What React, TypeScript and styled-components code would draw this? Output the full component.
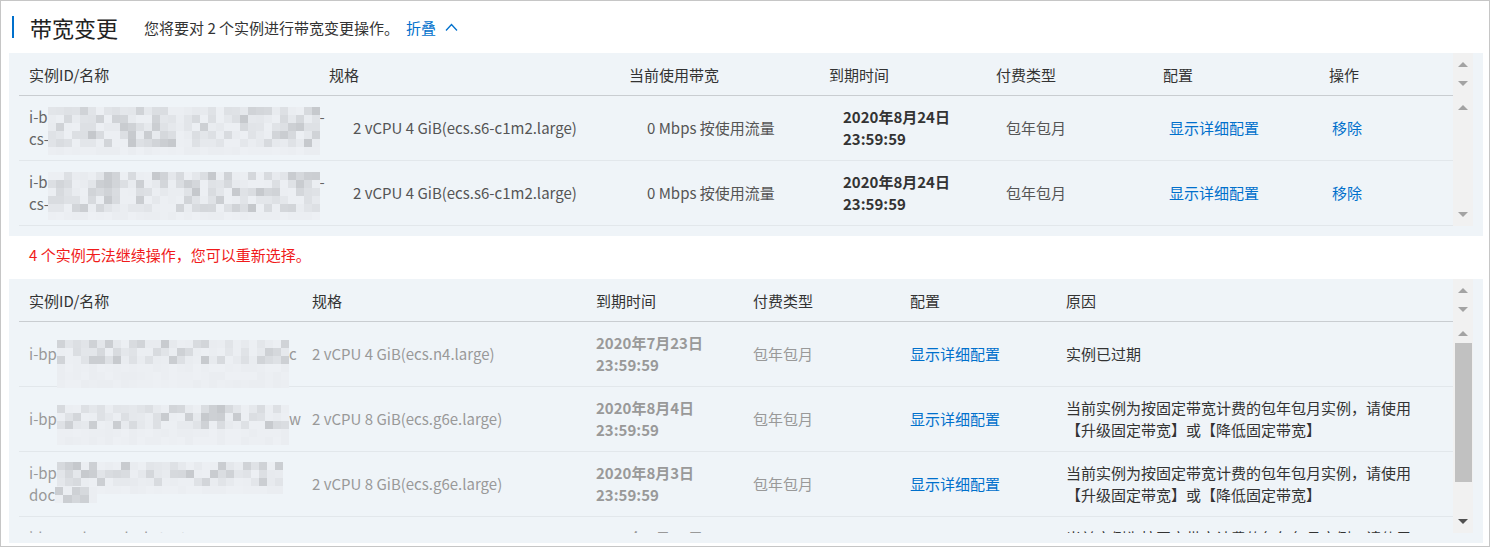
import React from 'react';
import styled, { createGlobalStyle } from 'styled-components';

const GlobalStyle = createGlobalStyle`
  html, body { margin: 0; padding: 0; background: #fff; }
  body {
    font-family: "Noto Sans CJK SC", "Noto Sans", sans-serif;
    font-size: 15px;
    color: #333;
  }
  * { box-sizing: border-box; }
`;

const BLUE = '#0070cc';

const Frame = styled.div`
  width: 1490px;
  height: 547px;
  border: 1px solid #c6c6c6;
  padding: 0 6px 0 8px;
  display: flex;
  flex-direction: column;
  overflow: hidden;
`;

const TitleRow = styled.div`
  height: 52px;
  display: flex;
  align-items: center;
  padding-left: 3px;
`;

const TitleBar = styled.span`
  width: 2px;
  height: 22px;
  background: ${BLUE};
`;

const Title = styled.h1`
  margin: 0 0 0 16px;
  font-size: 22px;
  font-weight: 400;
  line-height: 1;
  color: #222;
`;

const Subtitle = styled.span`
  margin-left: 26px;
  font-size: 15px;
  color: #333;
`;

const FoldLink = styled.a`
  margin-left: 7px;
  color: ${BLUE};
  font-size: 15px;
  display: inline-flex;
  align-items: center;
  gap: 9px;
  cursor: pointer;
`;

const Panel = styled.section`
  background: #eff4f8;
  padding: 0 10px 10px 10px;
`;

const HeadRow = styled.div`
  display: flex;
`;

const HeadGrid = styled.div<{ $cols: string }>`
  flex: 1;
  display: grid;
  grid-template-columns: ${(p) => p.$cols};
  height: 43px;
  align-items: center;
  border-bottom: 1px solid #c9cdd1;
`;

const HeadCell = styled.div`
  padding-left: 10px;
  color: #333;
  white-space: nowrap;
`;

const Track = styled.div`
  width: 20px;
  background: #f1f1f1;
  display: flex;
  flex-direction: column;
  align-items: center;
`;

const HeadTrack = styled(Track)`
  padding-top: 9px;
  gap: 14px;
`;

const BodyTrack = styled(Track)`
  padding: 9px 0 9px;
`;

const Arrow = styled.span<{ $dir: 'up' | 'down'; $dark?: boolean }>`
  width: 0;
  height: 0;
  border-left: 5px solid transparent;
  border-right: 5px solid transparent;
  ${(p) =>
    p.$dir === 'up'
      ? `border-bottom: 5px solid ${p.$dark ? '#505050' : '#a3a3a3'};`
      : `border-top: 5px solid ${p.$dark ? '#505050' : '#a3a3a3'};`}
`;

const Thumb = styled.span`
  width: 17px;
  height: 139px;
  margin-top: 7px;
  background: #c1c1c1;
`;

const Spacer = styled.span`
  flex: 1;
`;

const BodyWrap = styled.div`
  display: flex;
`;

const Viewport = styled.div<{ $h: number }>`
  flex: 1;
  height: ${(p) => p.$h}px;
  overflow: hidden;
`;

const Row = styled.div<{ $cols: string }>`
  display: grid;
  grid-template-columns: ${(p) => p.$cols};
  min-height: 65px;
  align-items: center;
  border-bottom: 1px solid #e2e7eb;
`;

type Tone = 'id' | 'normal' | 'muted' | 'strong' | 'link' | 'reason' | 'mutedStrong';

const toneColor: Record<Tone, string> = {
  id: '#666',
  normal: '#555',
  muted: '#999',
  strong: '#333',
  mutedStrong: '#999',
  link: BLUE,
  reason: '#333',
};

const Cell = styled.div<{ $tone: Tone }>`
  padding-left: 10px;
  line-height: 22px;
  color: ${(p) => toneColor[p.$tone]};
  font-weight: ${(p) => (p.$tone === 'strong' || p.$tone === 'mutedStrong' ? 700 : 400)};
  cursor: ${(p) => (p.$tone === 'link' ? 'pointer' : 'default')};
  white-space: nowrap;
`;

const Line = styled.div`
  display: block;
  white-space: nowrap;
`;

const MaskSlot = styled.span<{ $w: number }>`
  display: inline-block;
  width: ${(p) => p.$w}px;
  height: 22px;
  vertical-align: top;
  position: relative;
`;

const MosaicGrid = styled.span<{ $cols: number; $top: number }>`
  position: absolute;
  left: 0;
  top: ${(p) => p.$top}px;
  width: 100%;
  display: grid;
  grid-template-columns: repeat(${(p) => p.$cols}, 1fr);
  grid-auto-rows: 8px;
`;

const Tile = styled.span`
  display: block;
`;

const Note = styled.div`
  height: 43px;
  display: flex;
  align-items: center;
  padding: 0 0 7px 20px;
  color: #f01b1b;
  font-size: 15px;
`;

function mulberry32(a: number) {
  return function () {
    a |= 0;
    a = (a + 0x6d2b79f5) | 0;
    let t = Math.imul(a ^ (a >>> 15), 1 | a);
    t = (t + Math.imul(t ^ (t >>> 7), 61 | t)) ^ t;
    return ((t ^ (t >>> 14)) >>> 0) / 4294967296;
  };
}

function Mask({ w, seed, rows, faintFrom, top = 0 }: { w: number; seed: number; rows: number; faintFrom: number; top?: number }) {
  const cols = Math.max(1, Math.round(w / 8));
  const rnd = mulberry32(seed);
  const tiles: string[] = [];
  for (let r = 0; r < rows; r++) {
    for (let c = 0; c < cols; c++) {
      const faint = r >= faintFrom;
      const x = rnd();
      const v = faint ? 234 + Math.floor(x * 4) : 236 - Math.floor(x * x * 40);
      tiles.push(`rgb(${v},${Math.min(255, v + 3)},${Math.min(255, v + 7)})`);
    }
  }
  return (
    <MaskSlot $w={w}>
      <MosaicGrid $cols={cols} $top={top}>
        {tiles.map((c, i) => (
          <Tile key={i} style={{ background: c }} />
        ))}
      </MosaicGrid>
    </MaskSlot>
  );
}

const ChevronUp = () => (
  <svg width="13" height="8" viewBox="0 0 13 8" fill="none">
    <polyline points="1,7.5 6.5,1.5 12,7.5" stroke={BLUE} strokeWidth="1.3" />
  </svg>
);

const P1_HEAD = '300px 300px 200px 167px 167px 166px 134px';
const P1_BODY = '324px 294px 196px 163px 163px 163px 131px';
const P2_COLS = '283px 284px 157px 157px 156px 397px';

const p1Head = ['实例ID/名称', '规格', '当前使用带宽', '到期时间', '付费类型', '配置', '操作'];
const p2Head = ['实例ID/名称', '规格', '到期时间', '付费类型', '配置', '原因'];

const p1Rows = [{ seed: 11 }, { seed: 23 }];

const REASON1 = '当前实例为按固定带宽计费的包年包月实例，请使用';
const REASON2 = '【升级固定带宽】或【降低固定带宽】';

export default function App() {
  return (
    <>
      <GlobalStyle />
      <Frame>
        <TitleRow>
          <TitleBar />
          <Title>带宽变更</Title>
          <Subtitle>您将要对 2 个实例进行带宽变更操作。</Subtitle>
          <FoldLink>
            折叠
            <ChevronUp />
          </FoldLink>
        </TitleRow>

        <Panel>
          <HeadRow>
            <HeadGrid $cols={P1_HEAD}>
              {p1Head.map((h) => (
                <HeadCell key={h}>{h}</HeadCell>
              ))}
            </HeadGrid>
            <HeadTrack>
              <Arrow $dir="up" />
              <Arrow $dir="down" />
            </HeadTrack>
          </HeadRow>
          <BodyWrap>
            <Viewport $h={130}>
              {p1Rows.map((r, i) => (
                <Row key={i} $cols={P1_BODY}>
                  <Cell $tone="id">
                    <Line>
                      i-b
                      <Mask w={272} seed={r.seed} rows={6} faintFrom={5} top={1} />-
                    </Line>
                    <Line>cs-</Line>
                  </Cell>
                  <Cell $tone="normal">2 vCPU 4 GiB(ecs.s6-c1m2.large)</Cell>
                  <Cell $tone="normal">0 Mbps 按使用流量</Cell>
                  <Cell $tone="strong">
                    <Line>2020年8月24日</Line>
                    <Line>23:59:59</Line>
                  </Cell>
                  <Cell $tone="normal">包年包月</Cell>
                  <Cell $tone="link">显示详细配置</Cell>
                  <Cell $tone="link">移除</Cell>
                </Row>
              ))}
            </Viewport>
            <BodyTrack>
              <Arrow $dir="up" />
              <Spacer />
              <Arrow $dir="down" />
            </BodyTrack>
          </BodyWrap>
        </Panel>

        <Note>4 个实例无法继续操作，您可以重新选择。</Note>

        <Panel>
          <HeadRow>
            <HeadGrid $cols={P2_COLS}>
              {p2Head.map((h) => (
                <HeadCell key={h}>{h}</HeadCell>
              ))}
            </HeadGrid>
            <HeadTrack>
              <Arrow $dir="up" />
              <Arrow $dir="down" />
            </HeadTrack>
          </HeadRow>
          <BodyWrap>
            <Viewport $h={211}>
              <Row $cols={P2_COLS}>
                <Cell $tone="muted">
                  <Line>
                    i-bp
                    <Mask w={232} seed={41} rows={6} faintFrom={3} top={-3} />c
                  </Line>
                </Cell>
                <Cell $tone="muted">2 vCPU 4 GiB(ecs.n4.large)</Cell>
                <Cell $tone="mutedStrong">
                  <Line>2020年7月23日</Line>
                  <Line>23:59:59</Line>
                </Cell>
                <Cell $tone="muted">包年包月</Cell>
                <Cell $tone="link">显示详细配置</Cell>
                <Cell $tone="reason">实例已过期</Cell>
              </Row>
              <Row $cols={P2_COLS}>
                <Cell $tone="muted">
                  <Line>
                    i-bp
                    <Mask w={232} seed={57} rows={5} faintFrom={3} top={-3} />w
                  </Line>
                </Cell>
                <Cell $tone="muted">2 vCPU 8 GiB(ecs.g6e.large)</Cell>
                <Cell $tone="mutedStrong">
                  <Line>2020年8月4日</Line>
                  <Line>23:59:59</Line>
                </Cell>
                <Cell $tone="muted">包年包月</Cell>
                <Cell $tone="link">显示详细配置</Cell>
                <Cell $tone="reason">
                  <Line>{REASON1}</Line>
                  <Line>{REASON2}</Line>
                </Cell>
              </Row>
              <Row $cols={P2_COLS}>
                <Cell $tone="muted">
                  <Line>
                    i-bp
                    <Mask w={226} seed={73} rows={4} faintFrom={3} top={0} />
                  </Line>
                  <Line>
                    doc
                    <Mask w={42} seed={89} rows={2} faintFrom={2} top={3} />
                  </Line>
                </Cell>
                <Cell $tone="muted">2 vCPU 8 GiB(ecs.g6e.large)</Cell>
                <Cell $tone="mutedStrong">
                  <Line>2020年8月3日</Line>
                  <Line>23:59:59</Line>
                </Cell>
                <Cell $tone="muted">包年包月</Cell>
                <Cell $tone="link">显示详细配置</Cell>
                <Cell $tone="reason">
                  <Line>{REASON1}</Line>
                  <Line>{REASON2}</Line>
                </Cell>
              </Row>
              <Row $cols={P2_COLS}>
                <Cell $tone="muted">
                  <Line>i-bp18Sh 8c1d6zbrt4ct</Line>
                  <Line>docker-8</Line>
                </Cell>
                <Cell $tone="muted">2 vCPU 8 GiB(ecs.g6e.large)</Cell>
                <Cell $tone="mutedStrong">
                  <Line>2020年8月17日</Line>
                  <Line>23:59:59</Line>
                </Cell>
                <Cell $tone="muted">包年包月</Cell>
                <Cell $tone="link">显示详细配置</Cell>
                <Cell $tone="reason">
                  <Line>{REASON1}</Line>
                  <Line>{REASON2}</Line>
                </Cell>
              </Row>
            </Viewport>
            <BodyTrack>
              <Arrow $dir="up" />
              <Thumb />
              <Spacer />
              <Arrow $dir="down" $dark />
            </BodyTrack>
          </BodyWrap>
        </Panel>
      </Frame>
    </>
  );
}
